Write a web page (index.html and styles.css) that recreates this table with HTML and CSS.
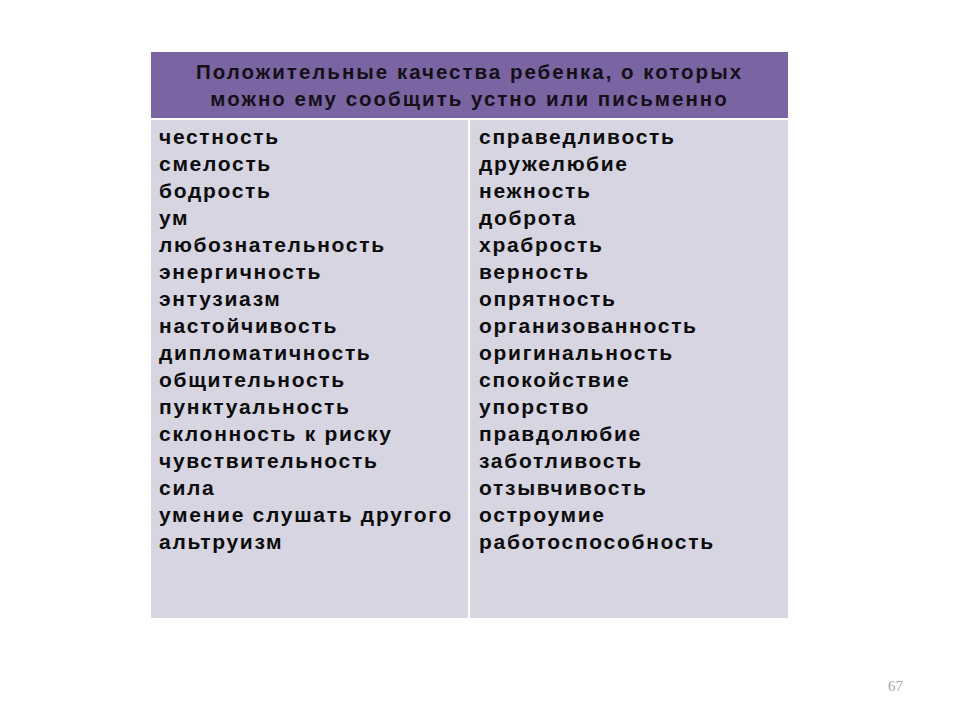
FILE: index.html
```html
<!DOCTYPE html>
<html lang="ru">
<head>
<meta charset="utf-8">
<title>Положительные качества ребенка</title>
<link rel="stylesheet" href="styles.css">
</head>
<body>
<div class="slide">
  <div class="table">
    <div class="head">Положительные качества ребенка, о которых<br>можно ему сообщить устно или письменно</div>
    <div class="body">
      <ul class="col">
        <li>честность</li>
        <li>смелость</li>
        <li>бодрость</li>
        <li>ум</li>
        <li>любознательность</li>
        <li>энергичность</li>
        <li>энтузиазм</li>
        <li>настойчивость</li>
        <li>дипломатичность</li>
        <li>общительность</li>
        <li>пунктуальность</li>
        <li>склонность к риску</li>
        <li>чувствительность</li>
        <li>сила</li>
        <li>умение слушать другого</li>
        <li>альтруизм</li>
      </ul>
      <ul class="col">
        <li>справедливость</li>
        <li>дружелюбие</li>
        <li>нежность</li>
        <li>доброта</li>
        <li>храбрость</li>
        <li>верность</li>
        <li>опрятность</li>
        <li>организованность</li>
        <li>оригинальность</li>
        <li>спокойствие</li>
        <li>упорство</li>
        <li>правдолюбие</li>
        <li>заботливость</li>
        <li>отзывчивость</li>
        <li>остроумие</li>
        <li>работоспособность</li>
      </ul>
    </div>
  </div>
  <div class="pagenum">67</div>
</div>
</body>
</html>
```
FILE: styles.css
```css
html, body {
  margin: 0;
  padding: 0;
  background: #ffffff;
}
.slide {
  width: 960px;
  height: 720px;
  box-sizing: border-box;
  padding: 52px 0 0 151px;
  display: flex;
  flex-direction: column;
  font-family: "Liberation Sans", Arial, sans-serif;
}
.table {
  width: 637px;
  display: flex;
  flex-direction: column;
  gap: 2px;
}
.head {
  height: 66px;
  background: #7b64a2;
  color: #141018;
  font-weight: bold;
  font-size: 20.5px;
  line-height: 27px;
  letter-spacing: 2px;
  text-align: center;
  box-sizing: border-box;
  padding-top: 6px;
}
.body {
  height: 498px;
  display: grid;
  grid-template-columns: 317px 318px;
  gap: 2px;
}
.col {
  list-style: none;
  margin: 0;
  background: #d6d5e1;
  padding: 3px 0 0 8px;
  color: #0c0c0c;
  font-weight: bold;
  font-size: 21px;
  line-height: 27px;
  letter-spacing: 1.7px;
}
.col + .col {
  padding-left: 9px;
}
.pagenum {
  margin: 60px 0 0 737px;
  font-family: "Liberation Serif", "Times New Roman", serif;
  font-size: 15px;
  color: #a8a8a8;
}
```
